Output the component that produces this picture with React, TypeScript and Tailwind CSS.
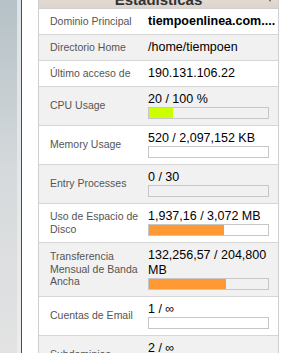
import React from 'react';

interface StatRow {
  label: string;
  value: string;
  bold?: boolean;
  bar?: { pct: number; color: string };
}

const rows: StatRow[] = [
  { label: 'Dominio Principal', value: 'tiempoenlinea.com....', bold: true },
  { label: 'Directorio Home', value: '/home/tiempoen' },
  { label: 'Último acceso de', value: '190.131.106.22' },
  { label: 'CPU Usage', value: '20 / 100 %', bar: { pct: 20, color: '#ccff00' } },
  { label: 'Memory Usage', value: '520 / 2,097,152 KB', bar: { pct: 0, color: '#ccff00' } },
  { label: 'Entry Processes', value: '0 / 30', bar: { pct: 0, color: '#ccff00' } },
  { label: 'Uso de Espacio de Disco', value: '1,937,16 / 3,072 MB', bar: { pct: 63, color: '#ff9933' } },
  {
    label: 'Transferencia Mensual de Banda Ancha',
    value: '132,256,57 / 204,800 MB',
    bar: { pct: 64.6, color: '#ff9933' },
  },
  { label: 'Cuentas de Email', value: '1 / ∞', bar: { pct: 0, color: '#ccff00' } },
  { label: 'Subdominios', value: '2 / ∞', bar: { pct: 0, color: '#ccff00' } },
];

function Bar({ pct, color }: { pct: number; color: string }) {
  return (
    <div className="w-[121px] h-[12px] border border-[#c6c6c6]">
      <div className="h-full" style={{ width: `${pct}%`, backgroundColor: color }} />
    </div>
  );
}

export default function App() {
  return (
    <div
      className="flex h-[353px] w-[291px] overflow-hidden bg-white"
      style={{ fontFamily: '"Liberation Sans", Arial, sans-serif' }}
    >
      <div className="w-[17px] shrink-0 bg-linear-to-b from-[#b5c1c7] via-[#d6dadc] to-[#e3e3e3]" />
      <div className="w-[4px] shrink-0 bg-linear-to-b from-[#dde3e6] to-[#ececec]" />
      <div className="w-[1px] shrink-0 bg-[#4d4d4d]" />
      <div className="w-[16px] shrink-0" />

      <div className="w-[241px] shrink-0 mt-[-13px] border-x border-[#cfcfcf] self-start">
        <div className="relative h-[22px] pt-[4px] border-b border-[#cfcfcf] bg-linear-to-b from-[#ebe4dd] to-[#ddd3cb] text-center text-[15px] leading-[18px] font-bold text-[#333]">
          Estadísticas
          <span className="absolute right-[5px] top-[9px] w-0 h-0 border-x-[3px] border-x-transparent border-t-[6px] border-t-[#555]" />
        </div>

        {rows.map((row, i) => (
          <div
            key={row.label}
            className={`flex items-center border-b border-[#d6d6d6] leading-[15px] ${i % 2 === 1 ? 'bg-[#f1f1f1]' : 'bg-white'} ${row.bar ? 'pt-[5px] pb-[6px]' : 'py-[5px]'}`}
          >
            <div className="w-[109px] shrink-0 pl-[11px] pr-[8px] text-[10.5px] leading-[12.5px] text-[#555]">
              {row.label}
            </div>
            <div className="flex-1 pr-[8px] text-black">
              <div className={`text-[12.5px] leading-[15px] ${row.bold ? 'font-bold whitespace-nowrap overflow-hidden' : ''}`}>
                {row.value}
              </div>
              {row.bar && <Bar pct={row.bar.pct} color={row.bar.color} />}
            </div>
          </div>
        ))}
      </div>
    </div>
  );
}
